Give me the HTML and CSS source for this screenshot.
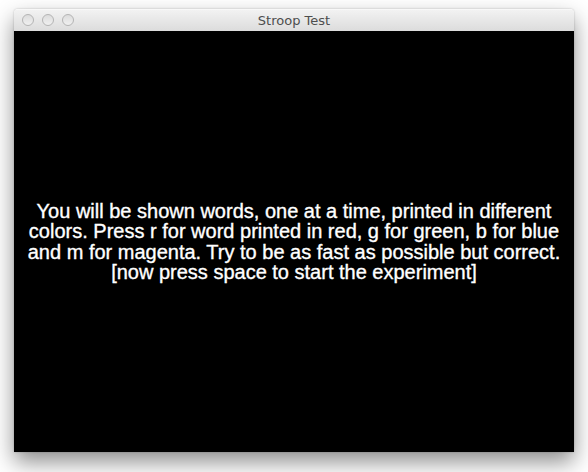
FILE: index.html
```html
<!DOCTYPE html>
<html>
<head>
<meta charset="utf-8">
<link rel="stylesheet" href="styles.css">
</head>
<body>
<div class="window">
  <div class="titlebar">
    <div class="lights">
      <span class="light"></span>
      <span class="light"></span>
      <span class="light"></span>
    </div>
    <div class="title">Stroop Test</div>
  </div>
  <div class="content">
    <p class="message">
      <span class="line">You will be shown words, one at a time, printed in different</span>
      <span class="line">colors. Press r for word printed in red, g for green, b for blue</span>
      <span class="line">and m for magenta. Try to be as fast as possible but correct.</span>
      <span class="line">[now press space to start the experiment]</span>
    </p>
  </div>
</div>
</body>
</html>
```

FILE: styles.css
```css
html, body {
  margin: 0;
  padding: 0;
  background: #ffffff;
}

body {
  padding: 9px 0 20px 14px;
  min-height: 472px;
  box-sizing: border-box;
}

.window {
  width: 560px;
  border-radius: 4px 4px 0 0;
  box-shadow: 0 10px 22px rgba(0, 0, 0, 0.45), 0 0 2px rgba(0, 0, 0, 0.25);
  overflow: hidden;
}

.titlebar {
  position: relative;
  height: 22px;
  background: linear-gradient(#f2f2f2, #dcdcdc);
  border-top: 1px solid #f8f8f8;
  box-sizing: border-box;
  display: flex;
  align-items: center;
  justify-content: center;
}

.lights {
  position: absolute;
  left: 8px;
  top: 4px;
  display: flex;
  gap: 8px;
}

.light {
  width: 12px;
  height: 12px;
  box-sizing: border-box;
  border-radius: 50%;
  border: 1px solid #b4b4b4;
  background: linear-gradient(#dcdcdc, #f0f0f0);
}

.title {
  font-family: "DejaVu Sans", "Liberation Sans", sans-serif;
  font-size: 13px;
  color: #4e4e4e;
  line-height: 22px;
}

.content {
  height: 421px;
  background: #000000;
  display: flex;
  align-items: center;
  justify-content: center;
}

.message {
  margin: 0;
  color: #ffffff;
  font-family: "Liberation Sans", Arial, sans-serif;
  font-size: 20px;
  line-height: 20.5px;
  text-align: center;
  -webkit-text-stroke: 0.35px #ffffff;
}

.line {
  display: block;
  white-space: nowrap;
}
```
